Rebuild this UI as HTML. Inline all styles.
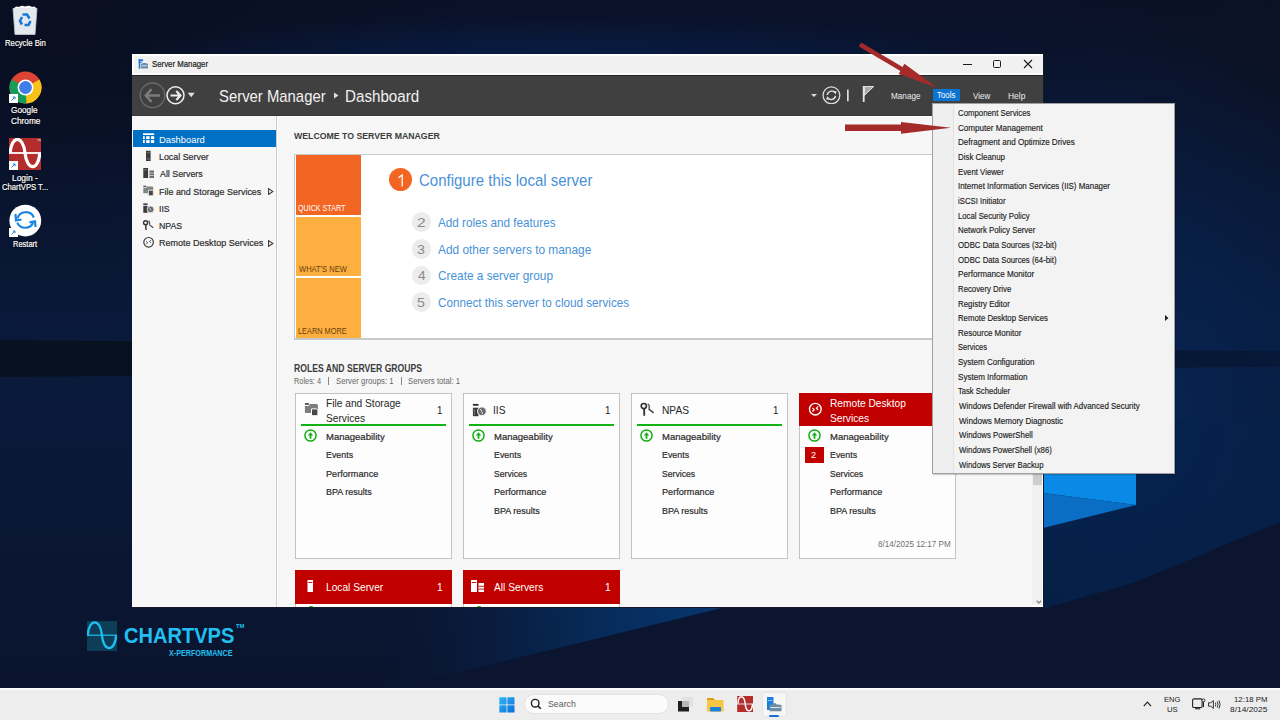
<!DOCTYPE html>
<html><head><meta charset="utf-8">
<style>
*{margin:0;padding:0;box-sizing:border-box}
html,body{width:1280px;height:720px;overflow:hidden}
body{position:relative;font-family:"Liberation Sans",sans-serif;background:#0a1228;line-height:normal}
.a{position:absolute;white-space:nowrap}
</style></head><body>
<svg class="a" style="left:0;top:0" width="1280" height="688" viewBox="0 0 1280 688">
 <defs>
  <linearGradient id="bgv" x1="0" y1="0" x2="0" y2="1">
   <stop offset="0" stop-color="#0a1128"/><stop offset="0.3" stop-color="#09193a"/><stop offset="0.55" stop-color="#0a1a3b"/><stop offset="0.85" stop-color="#0a1633"/><stop offset="1" stop-color="#0a142e"/>
  </linearGradient>
  <radialGradient id="tl" cx="0" cy="0" r="1" gradientUnits="userSpaceOnUse" gradientTransform="translate(60 40) scale(420 300)">
   <stop offset="0" stop-color="#090e1f" stop-opacity="0.9"/><stop offset="1" stop-color="#090e1f" stop-opacity="0"/>
  </radialGradient>
  <radialGradient id="tr" cx="0" cy="0" r="1" gradientUnits="userSpaceOnUse" gradientTransform="translate(1280 60) scale(300 260)">
   <stop offset="0" stop-color="#0b1226" stop-opacity="0.9"/><stop offset="1" stop-color="#0b1226" stop-opacity="0"/>
  </radialGradient>
  <radialGradient id="rb" cx="0" cy="0" r="1" gradientUnits="userSpaceOnUse" gradientTransform="translate(1120 420) scale(300 380)">
   <stop offset="0" stop-color="#062656" stop-opacity="0.9"/><stop offset="1" stop-color="#062656" stop-opacity="0"/>
  </radialGradient>
  <linearGradient id="band" x1="0" y1="0" x2="1280" y2="0" gradientUnits="userSpaceOnUse">
   <stop offset="0" stop-color="#08111f"/><stop offset="0.2" stop-color="#08111f"/><stop offset="1" stop-color="#071838"/>
  </linearGradient>
  <radialGradient id="topc" cx="0" cy="0" r="1" gradientUnits="userSpaceOnUse" gradientTransform="translate(560 64) scale(460 50)">
   <stop offset="0" stop-color="#07204f" stop-opacity="0.8"/><stop offset="1" stop-color="#07204f" stop-opacity="0"/>
  </radialGradient>
  <linearGradient id="beamA" x1="380" y1="0" x2="760" y2="0" gradientUnits="userSpaceOnUse">
   <stop offset="0" stop-color="#0b1a3a" stop-opacity="0"/><stop offset="0.55" stop-color="#072a58"/><stop offset="1" stop-color="#063a74"/>
  </linearGradient>
 </defs>
 <rect width="1280" height="688" fill="url(#bgv)"/>
 <rect width="1280" height="688" fill="url(#tl)"/>
 <rect width="1280" height="688" fill="url(#tr)"/>
 <rect width="1280" height="688" fill="url(#rb)"/>
 <rect width="1280" height="688" fill="url(#topc)"/>
 <polygon points="0,340 1280,351 1280,367 0,377" fill="url(#band)"/>
 <polygon points="300,688 420,682 726,607 1043,530 1043,688" fill="#0b1530"/>
 <polygon points="300,711 726,607 1043,529 1043,560 380,560" fill="url(#beamA)"/>
 <polygon points="1043,609 1136,582 1280,522 1280,688 1043,688" fill="#0b1530"/>
 <polygon points="1043,420 1280,420 1280,522 1136,582 1043,609" fill="#04214c" opacity="0.5"/>
</svg>
<svg class="a" style="left:1043px;top:440px" width="100" height="100">
 <polygon points="0,0 93,0 93,65 0,53" fill="#0a8ae6"/>
 <polygon points="0,53 93,65 0,88" fill="#0a6fc4"/>
</svg>
<svg class="a" style="left:11px;top:4px" width="28" height="32" viewBox="0 0 28 32">
  <path d="M2 4.5 L26 4.5 L24 30.5 L4 30.5 Z" fill="#e4e9ee" stroke="#c2ccd4" stroke-width="0.8"/>
  <path d="M2.5 4.8 Q5 1.5 8 3 Q11 0.8 14 2.5 Q18 0.8 21 3 Q24 1.5 25.5 4.8 Z" fill="#f5f7f9"/>
  <path d="M11.5 10.5 L16 10.5 L18.5 14.5" fill="none" stroke="#1a78d6" stroke-width="2.6"/>
  <path d="M19.5 17 L17.5 21 L13.5 21" fill="none" stroke="#1a78d6" stroke-width="2.6"/>
  <path d="M11 20.5 L9 17 L11 13" fill="none" stroke="#1a78d6" stroke-width="2.6"/>
</svg>
<div class="a" style="left:4.66px;top:38.40px;font-size:9.130px;font-weight:400;color:#fff;transform:scaleX(0.8468);transform-origin:0 0;text-shadow:0 0 2px #000,0 0 1px #000;-webkit-text-stroke:0.2px #fff">Recycle Bin</div>
<svg class="a" style="left:8px;top:70px" width="35" height="35" viewBox="-1 -1 35 35">
 <circle cx="16.5" cy="16.5" r="16.6" fill="#0a0f1a"/>
 <circle cx="16.5" cy="16.5" r="16" fill="#dd4436"/>
 <path d="M16.5 16.5 L2.64 8.5 A16 16 0 0 0 16.5 32.5 Z" fill="#169d56"/>
 <path d="M16.5 16.5 L16.5 32.5 A16 16 0 0 0 30.36 8.5 Z" fill="#f8c21a"/>
 <path d="M16.5 16.5 L8.5 30.36 A16 16 0 0 0 17.5 32.47 Z" fill="#169d56"/>
 <circle cx="16.5" cy="16.5" r="8" fill="#fff"/>
 <circle cx="16.5" cy="16.5" r="6.4" fill="#3f7ee8"/>
</svg>
<svg class="a" style="left:9px;top:94px" width="9" height="9" viewBox="0 0 9 9"><rect width="9" height="9" fill="#fff"/><path d="M2.5 6.5 L6 3 M3.8 3 L6 3 L6 5.2" fill="none" stroke="#2a7fd4" stroke-width="1"/></svg>
<div class="a" style="left:11.46px;top:105.15px;font-size:9.348px;font-weight:400;color:#fff;transform:scaleX(0.8821);transform-origin:0 0;text-shadow:0 0 2px #000,0 0 1px #000;-webkit-text-stroke:0.2px #fff">Google</div>
<div class="a" style="left:10.57px;top:114.88px;font-size:9.638px;font-weight:400;color:#fff;transform:scaleX(0.8602);transform-origin:0 0;text-shadow:0 0 2px #000,0 0 1px #000;-webkit-text-stroke:0.2px #fff">Chrome</div>
<svg class="a" style="left:9px;top:138px" width="32" height="32" viewBox="0 0 32 32">
 <rect width="32" height="32" fill="#b42c2c"/>
 <path d="M1.2 15 C2.5 -3.2 14 -3.2 16 15 C18 33.2 29.5 33.2 30.8 15" fill="none" stroke="#fff" stroke-width="3.2"/>
 <line x1="0" y1="15" x2="32" y2="15" stroke="#fff" stroke-width="1.8"/>
 <path d="M28.5 1.5 L30 1.5 M29.2 1.5 L29.2 3.2 M30.6 3.2 L30.6 1.5 L31.2 2.4 L31.8 1.5 L31.8 3.2" fill="none" stroke="#ddd" stroke-width="0.5"/>
</svg>
<svg class="a" style="left:9px;top:161px" width="9" height="9" viewBox="0 0 9 9"><rect width="9" height="9" fill="#fff"/><path d="M2.5 6.5 L6 3 M3.8 3 L6 3 L6 5.2" fill="none" stroke="#2a7fd4" stroke-width="1"/></svg>
<div class="a" style="left:12.15px;top:172.57px;font-size:8.406px;font-weight:400;color:#fff;transform:scaleX(1.0041);transform-origin:0 0;text-shadow:0 0 2px #000,0 0 1px #000;-webkit-text-stroke:0.2px #fff">Login -</div>
<div class="a" style="left:2.47px;top:181.87px;font-size:8.841px;font-weight:400;color:#fff;transform:scaleX(0.8692);transform-origin:0 0;text-shadow:0 0 2px #000,0 0 1px #000;-webkit-text-stroke:0.2px #fff">ChartVPS T...</div>
<svg class="a" style="left:9px;top:204px" width="33" height="33" viewBox="0 0 33 33">
 <circle cx="16.3" cy="16.6" r="15.9" fill="#fff"/>
 <path d="M8.5 14.5 A8.5 8 0 0 1 24.8 13.5" fill="none" stroke="#1a84de" stroke-width="2.2"/>
 <path d="M24 19 A8.5 8 0 0 1 8.3 18.6" fill="none" stroke="#1a84de" stroke-width="2.2"/>
 <path d="M6.5 10 L7 16.5 L12.5 15.5" fill="none" stroke="#1a84de" stroke-width="2.2"/>
 <path d="M26.5 23 L26 17.3 L20.5 18.3" fill="none" stroke="#1a84de" stroke-width="2.2"/>
</svg>
<svg class="a" style="left:9px;top:228px" width="9" height="9" viewBox="0 0 9 9"><rect width="9" height="9" fill="#fff"/><path d="M2.5 6.5 L6 3 M3.8 3 L6 3 L6 5.2" fill="none" stroke="#2a7fd4" stroke-width="1"/></svg>
<div class="a" style="left:13.03px;top:238.87px;font-size:8.406px;font-weight:400;color:#fff;transform:scaleX(0.8952);transform-origin:0 0;text-shadow:0 0 2px #000,0 0 1px #000;-webkit-text-stroke:0.2px #fff">Restart</div>
<svg class="a" style="left:87px;top:621px" width="30" height="30" viewBox="0 0 30 30">
 <rect width="30" height="30" fill="#0e3d57"/>
 <path d="M0.8 14.2 C1.8 -3 13.4 -3 14.9 14.2 C16.4 31.4 28 31.4 29.2 14.2" fill="none" stroke="#1ec0f2" stroke-width="2.3"/>
 <line x1="0" y1="14.2" x2="30" y2="14.2" stroke="#1ec0f2" stroke-width="1.2"/>
</svg>
<div class="a" style="left:124.49px;top:624.13px;font-size:21.159px;font-weight:700;color:#22c0f2;transform:scaleX(0.9481);transform-origin:0 0;">CHARTVPS</div>
<div class="a" style="left:236.00px;top:622.20px;font-size:6.087px;font-weight:700;color:#22c0f2;transform:scaleX(0.9412);transform-origin:0 0;">TM</div>
<div class="a" style="left:169.40px;top:647.77px;font-size:8.841px;font-weight:700;color:#22c0f2;transform:scaleX(0.8142);transform-origin:0 0;">X-PERFORMANCE</div>
<div class="a" style="left:1043px;top:54px;width:1px;height:554px;background:#141a28"></div>
<div class="a" style="left:132px;top:607px;width:912px;height:1px;background:#141a28"></div>
<div class="a" style="left:0;top:0;width:1280px;height:720px;clip-path:inset(54px 237px 113px 132px)">
<div class="a" style="left:132px;top:54px;width:911px;height:21px;background:#f1f1f1;border-top:2px solid #fff;border-left:2px solid #fff;border-bottom:2px solid #fbfbfb"></div>
<svg class="a" style="left:138px;top:59px" width="11" height="10" viewBox="0 0 11 10">
  <rect x="0.7" y="0.3" width="4.4" height="1.8" fill="#1a78d8"/>
  <rect x="0.7" y="0.3" width="1.6" height="9.4" fill="#1a78d8"/>
  <rect x="0.7" y="2.8" width="3.6" height="0.9" fill="#1a78d8"/>
  <path d="M3.1 5 L5 4 L8 4 L10 5 L10 9.6 L3.1 9.6 Z" fill="#6d8fae"/>
  <rect x="4" y="6.3" width="5.2" height="0.9" fill="#d8e4ee"/>
</svg>
<div class="a" style="left:152.33px;top:59.15px;font-size:9.348px;font-weight:400;color:#1a1a1a;transform:scaleX(0.8377);transform-origin:0 0;-webkit-text-stroke:0.2px #1a1a1a">Server Manager</div>
<div class="a" style="left:963px;top:64px;width:9px;height:1px;background:#1e1e1e"></div>
<div class="a" style="left:993px;top:60px;width:8px;height:8px;border:1px solid #1e1e1e;border-radius:1.5px"></div>
<svg class="a" style="left:1023px;top:59px" width="10" height="10" viewBox="0 0 10 10"><path d="M1 1 L9 9 M9 1 L1 9" stroke="#1e1e1e" stroke-width="1.1"/></svg>
<div class="a" style="left:132px;top:75px;width:911px;height:41px;background:#404040;border-top:1px solid #262626;border-bottom:1px solid #383838"></div>
<svg class="a" style="left:139px;top:82px" width="60" height="28" viewBox="0 0 60 28">
  <circle cx="13.5" cy="13.3" r="12.3" fill="none" stroke="#6c6c6c" stroke-width="1.3"/>
  <path d="M6.8 13.5 L21 13.5 M12.6 7.2 L6.8 13.5 L12.6 19.8" fill="none" stroke="#7c7c7c" stroke-width="2.5"/>
  <circle cx="36.5" cy="13.3" r="8.5" fill="none" stroke="#eeeeee" stroke-width="1.5"/>
  <path d="M31.5 13.5 L41.5 13.5 M37.3 9 L41.5 13.5 L37.3 18" fill="none" stroke="#eeeeee" stroke-width="2.1"/>
  <path d="M48.7 10.8 L55.7 10.8 L52.2 15.2 Z" fill="#e0e0e0"/>
</svg>
<div class="a" style="left:219.06px;top:86.20px;font-size:17.391px;font-weight:400;color:#f2f2f2;transform:scaleX(0.8559);transform-origin:0 0;">Server Manager</div>
<svg class="a" style="left:334px;top:92px" width="5" height="7"><path d="M0 0.5 L4.5 3.5 L0 6.5 Z" fill="#e0e0e0"/></svg>
<div class="a" style="left:345.05px;top:86.80px;font-size:16.522px;font-weight:400;color:#f2f2f2;transform:scaleX(0.9185);transform-origin:0 0;">Dashboard</div>
<svg class="a" style="left:808px;top:84px" width="70" height="20" viewBox="0 0 70 20">
  <path d="M3 10 L9 10 L6 13 Z" fill="#dcdcdc"/>
  <circle cx="23.4" cy="11.3" r="8.4" fill="none" stroke="#dcdcdc" stroke-width="1.3"/>
  <path d="M19.3 11 A4.3 4.3 0 0 1 26.8 8.6" fill="none" stroke="#dcdcdc" stroke-width="1.5"/>
  <path d="M27.5 11.8 A4.3 4.3 0 0 1 20 14" fill="none" stroke="#dcdcdc" stroke-width="1.5"/>
  <path d="M25 6.8 L28.6 7.2 L27.6 10.6 Z" fill="#dcdcdc"/>
  <path d="M21.8 15.8 L18.2 15.4 L19.2 12 Z" fill="#dcdcdc"/>
  <rect x="39" y="5.6" width="1.7" height="11.7" fill="#dcdcdc"/>
  <rect x="54.8" y="2" width="1.8" height="16" fill="#e6e6e6"/>
  <path d="M56.4 2.6 L65.6 2.6 L56.4 11.4 Z" fill="#a8a8a8" stroke="#e6e6e6" stroke-width="1"/>
</svg>
<div class="a" style="left:890.68px;top:90.85px;font-size:8.478px;font-weight:400;color:#eeeeee;transform:scaleX(0.9661);transform-origin:0 0;">Manage</div>
<div class="a" style="left:932.5px;top:89.3px;width:27px;height:12px;background:#0a74d0"></div>
<div class="a" style="left:936.98px;top:90.32px;font-size:9.058px;font-weight:400;color:#ffffff;transform:scaleX(0.8732);transform-origin:0 0;">Tools</div>
<div class="a" style="left:972.70px;top:90.58px;font-size:8.768px;font-weight:400;color:#eeeeee;transform:scaleX(0.9173);transform-origin:0 0;">View</div>
<div class="a" style="left:1007.98px;top:90.58px;font-size:8.768px;font-weight:400;color:#eeeeee;transform:scaleX(0.9647);transform-origin:0 0;">Help</div>
<div class="a" style="left:132px;top:116px;width:145px;height:491px;background:#f7f7f7;border-right:1px solid #cdcdcd"></div>
<div class="a" style="left:277px;top:116px;width:1px;height:491px;background:#ffffff"></div>
<div class="a" style="left:133px;top:130px;width:143px;height:17px;background:#0071c5"></div>
<svg class="a" style="left:143px;top:133px" width="12" height="11" viewBox="0 0 12 11">
  <rect x="0" y="0.3" width="11.2" height="1.7" fill="#fff"/>
  <rect x="0" y="3.2" width="1.8" height="2.9" fill="#fff"/><rect x="3.2" y="3.2" width="3.4" height="2.9" fill="#fff"/><rect x="7.9" y="3.2" width="3.3" height="2.9" fill="#fff"/>
  <rect x="0" y="7.1" width="1.8" height="2.9" fill="#fff"/><rect x="3.2" y="7.1" width="3.4" height="2.9" fill="#fff"/><rect x="7.9" y="7.1" width="3.3" height="2.9" fill="#fff"/>
</svg>
<svg class="a" style="left:140px;top:148px" width="18" height="102" viewBox="140 148 18 102">
  <rect x="146" y="150.8" width="4.6" height="10.2" fill="#3a3a3a"/><rect x="146.7" y="152.4" width="3.2" height="0.8" fill="#8a8a8a"/><rect x="146.7" y="158.6" width="3.2" height="0.8" fill="#8a8a8a"/>
  <rect x="143.3" y="168" width="4.8" height="10" fill="#3a3a3a"/><rect x="144" y="169.5" width="3.4" height="0.8" fill="#8a8a8a"/>
  <rect x="149.5" y="170.5" width="4.5" height="7.5" fill="#6a6a6a"/><rect x="149.5" y="172.6" width="4.5" height="0.9" fill="#cfcfcf"/><rect x="149.5" y="175" width="4.5" height="0.9" fill="#cfcfcf"/>
  <rect x="143.3" y="185.7" width="3" height="1.3" fill="#555"/><path d="M143.3 187.7 L146.3 187.7 L146.9 186.4 L152.4 186.4 L153.2 187.1 L153.2 193.3 L143.3 193.3 Z" fill="#828282"/>
  <path d="M148.4 190.2 L152.2 190.2 L153.3 191.3 L153.3 195.8 L148.4 195.8 Z" fill="#474747" stroke="#f7f7f7" stroke-width="0.8"/>
  <rect x="143.3" y="203.4" width="4.3" height="1.5" fill="#333"/><rect x="143.3" y="205.8" width="4.3" height="7" fill="#3a3a3a"/>
  <circle cx="150.6" cy="209.4" r="3.4" fill="#6a6a6a" stroke="#f7f7f7" stroke-width="0.8"/><path d="M149.2 207.9 L150.4 208.4 L150.1 209.6 L151.2 210.4" fill="none" stroke="#dcdcdc" stroke-width="0.8"/>
  <circle cx="145.6" cy="222.8" r="2" fill="none" stroke="#333" stroke-width="1.4"/><path d="M145.8 224.7 L146 230" stroke="#333" stroke-width="1.4"/>
  <path d="M148.5 220.7 Q150.4 222 149.4 224.6" fill="none" stroke="#555" stroke-width="1.1"/><path d="M149.3 224.6 L153.2 227.7" stroke="#444" stroke-width="1.2"/>
  <circle cx="148.6" cy="242.3" r="4.8" fill="none" stroke="#3a3a3a" stroke-width="1.2"/>
  <path d="M146.3 241.3 L147.7 242.7 L146.3 244.1 M150.9 240.1 L149.5 241.5 L150.9 242.9" fill="none" stroke="#3a3a3a" stroke-width="0.9"/>
</svg>
<div class="a" style="left:158.97px;top:133.80px;font-size:9.565px;font-weight:400;color:#ffffff;transform:scaleX(0.9790);transform-origin:0 0;">Dashboard</div>
<div class="a" style="left:159.00px;top:151.05px;font-size:9.565px;font-weight:400;color:#2e2e2e;transform:scaleX(0.9289);transform-origin:0 0;-webkit-text-stroke:0.2px #2e2e2e">Local Server</div>
<div class="a" style="left:159.70px;top:168.30px;font-size:9.565px;font-weight:400;color:#2e2e2e;transform:scaleX(0.9246);transform-origin:0 0;-webkit-text-stroke:0.2px #2e2e2e">All Servers</div>
<div class="a" style="left:159.00px;top:185.55px;font-size:9.565px;font-weight:400;color:#2e2e2e;transform:scaleX(0.9358);transform-origin:0 0;-webkit-text-stroke:0.2px #2e2e2e">File and Storage Services</div>
<div class="a" style="left:159.02px;top:202.80px;font-size:9.565px;font-weight:400;color:#2e2e2e;transform:scaleX(0.9048);transform-origin:0 0;-webkit-text-stroke:0.2px #2e2e2e">IIS</div>
<div class="a" style="left:159.01px;top:220.05px;font-size:9.565px;font-weight:400;color:#2e2e2e;transform:scaleX(0.9155);transform-origin:0 0;-webkit-text-stroke:0.2px #2e2e2e">NPAS</div>
<div class="a" style="left:158.99px;top:237.30px;font-size:9.565px;font-weight:400;color:#2e2e2e;transform:scaleX(0.9446);transform-origin:0 0;-webkit-text-stroke:0.2px #2e2e2e">Remote Desktop Services</div>
<svg class="a" style="left:268px;top:188px" width="6" height="7"><path d="M0.6 0.6 L4.8 3.5 L0.6 6.4 Z" fill="none" stroke="#3a3a3a" stroke-width="1.1"/></svg>
<svg class="a" style="left:268px;top:240px" width="6" height="7"><path d="M0.6 0.6 L4.8 3.5 L0.6 6.4 Z" fill="none" stroke="#3a3a3a" stroke-width="1.1"/></svg>
<div class="a" style="left:278px;top:116px;width:755px;height:491px;background:#f7f7f7;border-top:1px solid #fdfdfd"></div>
<div class="a" style="left:294.40px;top:129.75px;font-size:9.783px;font-weight:700;color:#3c3c3c;transform:scaleX(0.8946);transform-origin:0 0;">WELCOME TO SERVER MANAGER</div>
<div class="a" style="left:294px;top:154px;width:760px;height:186px;background:#fff;border:1px solid #c9c9c9;border-left:1.5px solid #c4c8cc;border-bottom:2px solid #c6cacd"></div>
<div class="a" style="left:295.5px;top:155px;width:65.5px;height:60px;background:#f26522"></div>
<div class="a" style="left:295.5px;top:217px;width:65.5px;height:59px;background:#fdb040"></div>
<div class="a" style="left:295.5px;top:278px;width:65.5px;height:60px;background:#fdb040"></div>
<div class="a" style="left:298.11px;top:202.57px;font-size:9.275px;font-weight:400;color:#ffffff;transform:scaleX(0.7704);transform-origin:0 0;">QUICK START</div>
<div class="a" style="left:298.50px;top:263.70px;font-size:9.130px;font-weight:400;color:#6a3d0e;transform:scaleX(0.8277);transform-origin:0 0;">WHAT'S NEW</div>
<div class="a" style="left:297.92px;top:324.60px;font-size:9.565px;font-weight:400;color:#6a3d0e;transform:scaleX(0.7710);transform-origin:0 0;">LEARN MORE</div>
<div class="a" style="left:388.9px;top:168.3px;width:23.2px;height:23.2px;border-radius:50%;background:#f26522"></div>
<svg class="a" style="left:396px;top:173px" width="10" height="16" viewBox="396 173 10 16"><path d="M398.6 177.6 L402.2 175 L402.2 186.4" fill="none" stroke="#ffffff" stroke-width="1.3"/></svg>
<div class="a" style="left:418.92px;top:171.30px;font-size:16.522px;font-weight:400;color:#4892d6;transform:scaleX(0.9084);transform-origin:0 0;">Configure this local server</div>
<div class="a" style="left:411.6px;top:212.4px;width:19.8px;height:19.8px;border-radius:50%;background:#ececec"></div>
<div class="a" style="left:416.94px;top:214.70px;font-size:13.478px;font-weight:400;color:#8a8a8a;transform:scaleX(1.1500);transform-origin:0 0;">2</div>
<div class="a" style="left:438.40px;top:214.70px;font-size:13.478px;font-weight:400;color:#4892d6;transform:scaleX(0.8674);transform-origin:0 0;">Add roles and features</div>
<div class="a" style="left:411.6px;top:239.1px;width:19.8px;height:19.8px;border-radius:50%;background:#ececec"></div>
<div class="a" style="left:417.27px;top:241.70px;font-size:13.478px;font-weight:400;color:#8a8a8a;transform:scaleX(1.0615);transform-origin:0 0;">3</div>
<div class="a" style="left:438.40px;top:241.70px;font-size:13.478px;font-weight:400;color:#4892d6;transform:scaleX(0.8827);transform-origin:0 0;">Add other servers to manage</div>
<div class="a" style="left:411.6px;top:265.6px;width:19.8px;height:19.8px;border-radius:50%;background:#ececec"></div>
<div class="a" style="left:417.54px;top:268.10px;font-size:13.478px;font-weight:400;color:#8a8a8a;transform:scaleX(1.0222);transform-origin:0 0;">4</div>
<div class="a" style="left:437.74px;top:268.10px;font-size:13.478px;font-weight:400;color:#4892d6;transform:scaleX(0.8778);transform-origin:0 0;">Create a server group</div>
<div class="a" style="left:411.6px;top:292.1px;width:19.8px;height:19.8px;border-radius:50%;background:#ececec"></div>
<div class="a" style="left:417.27px;top:294.80px;font-size:13.478px;font-weight:400;color:#8a8a8a;transform:scaleX(1.0615);transform-origin:0 0;">5</div>
<div class="a" style="left:437.75px;top:294.80px;font-size:13.478px;font-weight:400;color:#4892d6;transform:scaleX(0.8685);transform-origin:0 0;">Connect this server to cloud services</div>
<div class="a" style="left:293.86px;top:362.67px;font-size:10.145px;font-weight:700;color:#3c3c3c;transform:scaleX(0.8523);transform-origin:0 0;">ROLES AND SERVER GROUPS</div>
<div class="a" style="left:293.92px;top:374.80px;font-size:9.565px;font-weight:400;color:#666666;transform:scaleX(0.7706);transform-origin:0 0;">Roles: 4</div>
<div class="a" style="left:328.3px;top:377px;width:0.9px;height:8px;background:#888"></div>
<div class="a" style="left:335.69px;top:374.80px;font-size:9.565px;font-weight:400;color:#666666;transform:scaleX(0.8158);transform-origin:0 0;">Server groups: 1</div>
<div class="a" style="left:400.7px;top:377px;width:0.9px;height:8px;background:#888"></div>
<div class="a" style="left:407.69px;top:374.80px;font-size:9.565px;font-weight:400;color:#666666;transform:scaleX(0.8126);transform-origin:0 0;">Servers total: 1</div>
<div class="a" style="left:295px;top:393px;width:157px;height:166px;background:#fdfdfd;border:1px solid #c3c3c3"></div>
<div class="a" style="left:325.88px;top:397.17px;font-size:10.580px;font-weight:400;color:#262626;transform:scaleX(0.9630);transform-origin:0 0;">File and Storage</div>
<div class="a" style="left:326.12px;top:411.57px;font-size:10.580px;font-weight:400;color:#262626;transform:scaleX(0.9630);transform-origin:0 0;">Services</div>
<svg class="a" style="left:304px;top:402px" width="15" height="15" viewBox="0 0 15 15"><rect x="0.9" y="1" width="4" height="1.8" fill="#505050"/><path d="M0.9 3.9 L4.8 3.9 L5.6 2 L13 2 L13.9 2.9 L13.9 11 L0.9 11 Z" fill="#7d7d7d"/><path d="M7.5 6.9 L12.6 6.9 L13.9 8.2 L13.9 13.7 L7.5 13.7 Z" fill="#474747" stroke="#fdfdfd" stroke-width="1"/></svg>
<div class="a" style="left:301px;top:424px;width:145px;height:2px;background:#13b313"></div>
<div class="a" style="left:436.78px;top:404.77px;font-size:10.145px;font-weight:400;color:#262626;transform:scaleX(0.9630);transform-origin:0 0;">1</div>
<svg class="a" style="left:303.5px;top:429.3px" width="13" height="13" viewBox="0 0 13 13"><circle cx="6.5" cy="6.5" r="5.6" fill="none" stroke="#12b012" stroke-width="1.5"/><path d="M6.5 3.3 L9.2 6.4 L7.4 6.4 L7.4 9.7 L5.6 9.7 L5.6 6.4 L3.8 6.4 Z" fill="#12b012"/></svg>
<div class="a" style="left:325.87px;top:430.67px;font-size:9.710px;font-weight:400;color:#2a2a2a;transform:scaleX(0.9797);transform-origin:0 0;-webkit-text-stroke:0.2px #2a2a2a">Manageability</div>
<div class="a" style="left:325.92px;top:449.17px;font-size:9.710px;font-weight:400;color:#2a2a2a;transform:scaleX(0.9123);transform-origin:0 0;-webkit-text-stroke:0.2px #2a2a2a">Events</div>
<div class="a" style="left:325.89px;top:467.77px;font-size:9.710px;font-weight:400;color:#2a2a2a;transform:scaleX(0.9413);transform-origin:0 0;-webkit-text-stroke:0.2px #2a2a2a">Performance</div>
<div class="a" style="left:325.91px;top:486.47px;font-size:9.710px;font-weight:400;color:#2a2a2a;transform:scaleX(0.9244);transform-origin:0 0;-webkit-text-stroke:0.2px #2a2a2a">BPA results</div>
<div class="a" style="left:463px;top:393px;width:157px;height:166px;background:#fdfdfd;border:1px solid #c3c3c3"></div>
<div class="a" style="left:493.34px;top:404.37px;font-size:10.580px;font-weight:400;color:#262626;transform:scaleX(0.9630);transform-origin:0 0;">IIS</div>
<svg class="a" style="left:472px;top:402.5px" width="15" height="14" viewBox="0 0 15 14"><rect x="0.9" y="0.9" width="5.6" height="1.9" fill="#333"/><rect x="0.9" y="4.7" width="5.6" height="8.5" fill="#3a3a3a"/><rect x="1.9" y="5.8" width="1" height="6.5" fill="#777"/><circle cx="9.9" cy="8.3" r="4.4" fill="#6a6a6a" stroke="#fdfdfd" stroke-width="1"/><path d="M8 6.3 L9.6 7 L9.2 8.6 L10.6 9.6 L10 11.4" fill="none" stroke="#dcdcdc" stroke-width="1"/></svg>
<div class="a" style="left:469px;top:424px;width:145px;height:2px;background:#13b313"></div>
<div class="a" style="left:604.78px;top:404.77px;font-size:10.145px;font-weight:400;color:#262626;transform:scaleX(0.9630);transform-origin:0 0;">1</div>
<svg class="a" style="left:471.5px;top:429.3px" width="13" height="13" viewBox="0 0 13 13"><circle cx="6.5" cy="6.5" r="5.6" fill="none" stroke="#12b012" stroke-width="1.5"/><path d="M6.5 3.3 L9.2 6.4 L7.4 6.4 L7.4 9.7 L5.6 9.7 L5.6 6.4 L3.8 6.4 Z" fill="#12b012"/></svg>
<div class="a" style="left:493.87px;top:430.67px;font-size:9.710px;font-weight:400;color:#2a2a2a;transform:scaleX(0.9797);transform-origin:0 0;-webkit-text-stroke:0.2px #2a2a2a">Manageability</div>
<div class="a" style="left:493.92px;top:449.17px;font-size:9.710px;font-weight:400;color:#2a2a2a;transform:scaleX(0.9123);transform-origin:0 0;-webkit-text-stroke:0.2px #2a2a2a">Events</div>
<div class="a" style="left:494.15px;top:467.77px;font-size:9.710px;font-weight:400;color:#2a2a2a;transform:scaleX(0.8904);transform-origin:0 0;-webkit-text-stroke:0.2px #2a2a2a">Services</div>
<div class="a" style="left:493.89px;top:486.47px;font-size:9.710px;font-weight:400;color:#2a2a2a;transform:scaleX(0.9413);transform-origin:0 0;-webkit-text-stroke:0.2px #2a2a2a">Performance</div>
<div class="a" style="left:493.91px;top:505.07px;font-size:9.710px;font-weight:400;color:#2a2a2a;transform:scaleX(0.9244);transform-origin:0 0;-webkit-text-stroke:0.2px #2a2a2a">BPA results</div>
<div class="a" style="left:631px;top:393px;width:157px;height:166px;background:#fdfdfd;border:1px solid #c3c3c3"></div>
<div class="a" style="left:661.58px;top:404.37px;font-size:10.580px;font-weight:400;color:#262626;transform:scaleX(0.9630);transform-origin:0 0;">NPAS</div>
<svg class="a" style="left:640px;top:401.5px" width="15" height="15" viewBox="0 0 15 15"><circle cx="3.8" cy="4.1" r="2.6" fill="none" stroke="#333" stroke-width="1.7"/><path d="M4.1 6.5 L4.3 13.8" stroke="#333" stroke-width="1.8"/><path d="M7.7 1.7 Q10.2 3.5 8.8 6.8" fill="none" stroke="#555" stroke-width="1.4"/><path d="M8.6 6.8 L13.6 10.9" stroke="#444" stroke-width="1.5"/></svg>
<div class="a" style="left:637px;top:424px;width:145px;height:2px;background:#13b313"></div>
<div class="a" style="left:772.78px;top:404.77px;font-size:10.145px;font-weight:400;color:#262626;transform:scaleX(0.9630);transform-origin:0 0;">1</div>
<svg class="a" style="left:639.5px;top:429.3px" width="13" height="13" viewBox="0 0 13 13"><circle cx="6.5" cy="6.5" r="5.6" fill="none" stroke="#12b012" stroke-width="1.5"/><path d="M6.5 3.3 L9.2 6.4 L7.4 6.4 L7.4 9.7 L5.6 9.7 L5.6 6.4 L3.8 6.4 Z" fill="#12b012"/></svg>
<div class="a" style="left:661.87px;top:430.67px;font-size:9.710px;font-weight:400;color:#2a2a2a;transform:scaleX(0.9797);transform-origin:0 0;-webkit-text-stroke:0.2px #2a2a2a">Manageability</div>
<div class="a" style="left:661.92px;top:449.17px;font-size:9.710px;font-weight:400;color:#2a2a2a;transform:scaleX(0.9123);transform-origin:0 0;-webkit-text-stroke:0.2px #2a2a2a">Events</div>
<div class="a" style="left:662.15px;top:467.77px;font-size:9.710px;font-weight:400;color:#2a2a2a;transform:scaleX(0.8904);transform-origin:0 0;-webkit-text-stroke:0.2px #2a2a2a">Services</div>
<div class="a" style="left:661.89px;top:486.47px;font-size:9.710px;font-weight:400;color:#2a2a2a;transform:scaleX(0.9413);transform-origin:0 0;-webkit-text-stroke:0.2px #2a2a2a">Performance</div>
<div class="a" style="left:661.91px;top:505.07px;font-size:9.710px;font-weight:400;color:#2a2a2a;transform:scaleX(0.9244);transform-origin:0 0;-webkit-text-stroke:0.2px #2a2a2a">BPA results</div>
<div class="a" style="left:799px;top:393px;width:157px;height:166px;background:#fdfdfd;border:1px solid #c3c3c3"></div>
<div class="a" style="left:799px;top:393px;width:157px;height:32.6px;background:#c10000"></div>
<div class="a" style="left:829.88px;top:397.17px;font-size:10.580px;font-weight:400;color:#ffffff;transform:scaleX(0.9630);transform-origin:0 0;">Remote Desktop</div>
<div class="a" style="left:830.12px;top:411.57px;font-size:10.580px;font-weight:400;color:#ffffff;transform:scaleX(0.9630);transform-origin:0 0;">Services</div>
<svg class="a" style="left:808px;top:402px" width="15" height="15" viewBox="808 402 15 15"><circle cx="815.3" cy="409.2" r="5.8" fill="none" stroke="#fff" stroke-width="1.4"/><path d="M812.4 407.9 L814.2 409.7 L812.4 411.5 M818.2 406.4 L816.4 408.2 L818.2 410" fill="none" stroke="#fff" stroke-width="1.2"/></svg>
<svg class="a" style="left:807.5px;top:429.3px" width="13" height="13" viewBox="0 0 13 13"><circle cx="6.5" cy="6.5" r="5.6" fill="none" stroke="#12b012" stroke-width="1.5"/><path d="M6.5 3.3 L9.2 6.4 L7.4 6.4 L7.4 9.7 L5.6 9.7 L5.6 6.4 L3.8 6.4 Z" fill="#12b012"/></svg>
<div class="a" style="left:829.87px;top:430.67px;font-size:9.710px;font-weight:400;color:#2a2a2a;transform:scaleX(0.9797);transform-origin:0 0;-webkit-text-stroke:0.2px #2a2a2a">Manageability</div>
<div class="a" style="left:829.92px;top:449.17px;font-size:9.710px;font-weight:400;color:#2a2a2a;transform:scaleX(0.9123);transform-origin:0 0;-webkit-text-stroke:0.2px #2a2a2a">Events</div>
<div class="a" style="left:830.15px;top:467.77px;font-size:9.710px;font-weight:400;color:#2a2a2a;transform:scaleX(0.8904);transform-origin:0 0;-webkit-text-stroke:0.2px #2a2a2a">Services</div>
<div class="a" style="left:829.89px;top:486.47px;font-size:9.710px;font-weight:400;color:#2a2a2a;transform:scaleX(0.9413);transform-origin:0 0;-webkit-text-stroke:0.2px #2a2a2a">Performance</div>
<div class="a" style="left:829.91px;top:505.07px;font-size:9.710px;font-weight:400;color:#2a2a2a;transform:scaleX(0.9244);transform-origin:0 0;-webkit-text-stroke:0.2px #2a2a2a">BPA results</div>
<div class="a" style="left:805px;top:447px;width:19px;height:15.5px;background:#c10000"></div>
<div class="a" style="left:811.03px;top:449.17px;font-size:9.710px;font-weight:400;color:#ffffff;transform:scaleX(0.9450);transform-origin:0 0;">2</div>
<div class="a" style="left:878.06px;top:539.10px;font-size:9.130px;font-weight:400;color:#707070;transform:scaleX(0.8840);transform-origin:0 0;">8/14/2025 12:17 PM</div>
<div class="a" style="left:295px;top:570px;width:157px;height:45px;background:#fdfdfd;border:1px solid #c3c3c3"></div>
<div class="a" style="left:295px;top:570px;width:157px;height:34px;background:#c10000"></div>
<div class="a" style="left:325.58px;top:581.07px;font-size:10.580px;font-weight:400;color:#ffffff;transform:scaleX(0.9630);transform-origin:0 0;">Local Server</div>
<div class="a" style="left:436.78px;top:581.07px;font-size:10.580px;font-weight:400;color:#ffffff;transform:scaleX(0.9630);transform-origin:0 0;">1</div>
<svg class="a" style="left:307px;top:605px" width="8" height="4"><circle cx="4" cy="4" r="3" fill="#12b012"/></svg>
<div class="a" style="left:463px;top:570px;width:157px;height:45px;background:#fdfdfd;border:1px solid #c3c3c3"></div>
<div class="a" style="left:463px;top:570px;width:157px;height:34px;background:#c10000"></div>
<div class="a" style="left:494.30px;top:581.07px;font-size:10.580px;font-weight:400;color:#ffffff;transform:scaleX(0.9630);transform-origin:0 0;">All Servers</div>
<div class="a" style="left:604.78px;top:581.07px;font-size:10.580px;font-weight:400;color:#ffffff;transform:scaleX(0.9630);transform-origin:0 0;">1</div>
<svg class="a" style="left:475px;top:605px" width="8" height="4"><circle cx="4" cy="4" r="3" fill="#12b012"/></svg>
<svg class="a" style="left:307px;top:580px" width="8" height="13"><rect x="0.5" y="0" width="5.5" height="12" fill="#fff"/><rect x="1.3" y="2" width="4" height="0.9" fill="#c10000"/></svg>
<svg class="a" style="left:471px;top:580px" width="15" height="13"><rect x="0" y="0" width="6" height="12" fill="#fff"/><rect x="7.5" y="3" width="5.5" height="9" fill="#fff"/><rect x="7.5" y="5.8" width="5.5" height="0.9" fill="#c10000"/><rect x="7.5" y="8.6" width="5.5" height="0.9" fill="#c10000"/><rect x="0.8" y="2" width="4.4" height="0.9" fill="#c10000"/></svg>
<div class="a" style="left:1032px;top:116px;width:11px;height:491px;background:#f0f0f0"></div>
<div class="a" style="left:1033px;top:473px;width:9px;height:12px;background:#cdcdcd"></div>
<div class="a" style="left:1042px;top:116px;width:1px;height:491px;background:#ffffff"></div>
<div class="a" style="left:1032px;top:605px;width:11px;height:2px;background:#ffffff"></div>
<svg class="a" style="left:1035.5px;top:599.5px" width="6" height="4"><path d="M0.7 0.7 L2.9 3 L5.1 0.7" fill="none" stroke="#8a8a8a" stroke-width="1.3"/></svg>
</div>
<div class="a" style="left:932px;top:103px;width:243px;height:371px;background:#f3f3f3;border:1px solid #a0a0a0;box-shadow:1px 1px 1px rgba(0,0,0,0.18)"></div>
<div class="a" style="left:933px;top:104px;width:21px;height:369px;background:#efefef;border-right:1px solid #e2e2e2"></div>
<div class="a" style="left:958.26px;top:108.07px;font-size:8.841px;font-weight:400;color:#1c1c1c;transform:scaleX(0.8849);transform-origin:0 0;-webkit-text-stroke:0.15px #1c1c1c">Component Services</div>
<div class="a" style="left:958.24px;top:122.72px;font-size:8.841px;font-weight:400;color:#1c1c1c;transform:scaleX(0.9149);transform-origin:0 0;-webkit-text-stroke:0.15px #1c1c1c">Computer Management</div>
<div class="a" style="left:958.02px;top:137.37px;font-size:8.841px;font-weight:400;color:#1c1c1c;transform:scaleX(0.9110);transform-origin:0 0;-webkit-text-stroke:0.15px #1c1c1c">Defragment and Optimize Drives</div>
<div class="a" style="left:958.03px;top:152.02px;font-size:8.841px;font-weight:400;color:#1c1c1c;transform:scaleX(0.8942);transform-origin:0 0;-webkit-text-stroke:0.15px #1c1c1c">Disk Cleanup</div>
<div class="a" style="left:958.04px;top:166.67px;font-size:8.841px;font-weight:400;color:#1c1c1c;transform:scaleX(0.8833);transform-origin:0 0;-webkit-text-stroke:0.15px #1c1c1c">Event Viewer</div>
<div class="a" style="left:958.03px;top:181.32px;font-size:8.841px;font-weight:400;color:#1c1c1c;transform:scaleX(0.8979);transform-origin:0 0;-webkit-text-stroke:0.15px #1c1c1c">Internet Information Services (IIS) Manager</div>
<div class="a" style="left:958.26px;top:195.97px;font-size:8.841px;font-weight:400;color:#1c1c1c;transform:scaleX(0.8808);transform-origin:0 0;-webkit-text-stroke:0.15px #1c1c1c">iSCSI Initiator</div>
<div class="a" style="left:958.04px;top:210.62px;font-size:8.841px;font-weight:400;color:#1c1c1c;transform:scaleX(0.8780);transform-origin:0 0;-webkit-text-stroke:0.15px #1c1c1c">Local Security Policy</div>
<div class="a" style="left:958.03px;top:225.27px;font-size:8.841px;font-weight:400;color:#1c1c1c;transform:scaleX(0.8901);transform-origin:0 0;-webkit-text-stroke:0.15px #1c1c1c">Network Policy Server</div>
<div class="a" style="left:958.26px;top:239.92px;font-size:8.841px;font-weight:400;color:#1c1c1c;transform:scaleX(0.8811);transform-origin:0 0;-webkit-text-stroke:0.15px #1c1c1c">ODBC Data Sources (32-bit)</div>
<div class="a" style="left:958.26px;top:254.57px;font-size:8.841px;font-weight:400;color:#1c1c1c;transform:scaleX(0.8811);transform-origin:0 0;-webkit-text-stroke:0.15px #1c1c1c">ODBC Data Sources (64-bit)</div>
<div class="a" style="left:958.01px;top:269.22px;font-size:8.841px;font-weight:400;color:#1c1c1c;transform:scaleX(0.9239);transform-origin:0 0;-webkit-text-stroke:0.15px #1c1c1c">Performance Monitor</div>
<div class="a" style="left:958.04px;top:283.87px;font-size:8.841px;font-weight:400;color:#1c1c1c;transform:scaleX(0.8827);transform-origin:0 0;-webkit-text-stroke:0.15px #1c1c1c">Recovery Drive</div>
<div class="a" style="left:958.03px;top:298.52px;font-size:8.841px;font-weight:400;color:#1c1c1c;transform:scaleX(0.8956);transform-origin:0 0;-webkit-text-stroke:0.15px #1c1c1c">Registry Editor</div>
<div class="a" style="left:958.04px;top:313.17px;font-size:8.841px;font-weight:400;color:#1c1c1c;transform:scaleX(0.8817);transform-origin:0 0;-webkit-text-stroke:0.15px #1c1c1c">Remote Desktop Services</div>
<div class="a" style="left:958.02px;top:327.82px;font-size:8.841px;font-weight:400;color:#1c1c1c;transform:scaleX(0.9098);transform-origin:0 0;-webkit-text-stroke:0.15px #1c1c1c">Resource Monitor</div>
<div class="a" style="left:958.27px;top:342.47px;font-size:8.841px;font-weight:400;color:#1c1c1c;transform:scaleX(0.8545);transform-origin:0 0;-webkit-text-stroke:0.15px #1c1c1c">Services</div>
<div class="a" style="left:958.25px;top:357.12px;font-size:8.841px;font-weight:400;color:#1c1c1c;transform:scaleX(0.9066);transform-origin:0 0;-webkit-text-stroke:0.15px #1c1c1c">System Configuration</div>
<div class="a" style="left:958.24px;top:371.77px;font-size:8.841px;font-weight:400;color:#1c1c1c;transform:scaleX(0.9133);transform-origin:0 0;-webkit-text-stroke:0.15px #1c1c1c">System Information</div>
<div class="a" style="left:958.48px;top:386.42px;font-size:8.841px;font-weight:400;color:#1c1c1c;transform:scaleX(0.8633);transform-origin:0 0;-webkit-text-stroke:0.15px #1c1c1c">Task Scheduler</div>
<div class="a" style="left:958.70px;top:401.07px;font-size:8.841px;font-weight:400;color:#1c1c1c;transform:scaleX(0.8979);transform-origin:0 0;-webkit-text-stroke:0.15px #1c1c1c">Windows Defender Firewall with Advanced Security</div>
<div class="a" style="left:958.70px;top:415.72px;font-size:8.841px;font-weight:400;color:#1c1c1c;transform:scaleX(0.9145);transform-origin:0 0;-webkit-text-stroke:0.15px #1c1c1c">Windows Memory Diagnostic</div>
<div class="a" style="left:958.70px;top:430.37px;font-size:8.841px;font-weight:400;color:#1c1c1c;transform:scaleX(0.8900);transform-origin:0 0;-webkit-text-stroke:0.15px #1c1c1c">Windows PowerShell</div>
<div class="a" style="left:958.70px;top:445.02px;font-size:8.841px;font-weight:400;color:#1c1c1c;transform:scaleX(0.8800);transform-origin:0 0;-webkit-text-stroke:0.15px #1c1c1c">Windows PowerShell (x86)</div>
<div class="a" style="left:958.70px;top:459.67px;font-size:8.841px;font-weight:400;color:#1c1c1c;transform:scaleX(0.8783);transform-origin:0 0;-webkit-text-stroke:0.15px #1c1c1c">Windows Server Backup</div>
<svg class="a" style="left:1165px;top:315px" width="4" height="6"><path d="M0 0 L3.5 3 L0 6 Z" fill="#222"/></svg>
<svg class="a" style="left:840px;top:35px" width="120" height="105" viewBox="840 35 120 105">
 <path d="M858.9 46.5 L861.1 42.5 L902.6 66.9 L904.4 63.7 L937.3 87.7 L898.6 74.1 L900.4 70.9 Z" fill="#a52a2a"/>
 <path d="M845 124.5 L901 124.5 L901 122 L951 127.7 L901 133.8 L901 131 L845 131 Z" fill="#a52a2a"/>
</svg>
<div class="a" style="left:0;top:688px;width:1280px;height:32px;background:#ededed;border-top:2px solid #fbfbfb"></div>
<svg class="a" style="left:499px;top:696.5px" width="17" height="16" viewBox="0 0 17 16">
 <defs><linearGradient id="wg" x1="0" y1="0" x2="16" y2="16" gradientUnits="userSpaceOnUse"><stop offset="0" stop-color="#2fbaf8"/><stop offset="1" stop-color="#0a6ad6"/></linearGradient></defs>
 <rect x="0.3" y="0.3" width="7.2" height="7.2" rx="0.6" fill="url(#wg)"/><rect x="8.3" y="0.3" width="7.2" height="7.2" rx="0.6" fill="url(#wg)"/>
 <rect x="0.3" y="8.3" width="7.2" height="7.2" rx="0.6" fill="url(#wg)"/><rect x="8.3" y="8.3" width="7.2" height="7.2" rx="0.6" fill="url(#wg)"/>
</svg>
<div class="a" style="left:524px;top:694px;width:145px;height:20.3px;border-radius:10px;background:#fbfbfb;border:1px solid #e2e2e2"></div>
<svg class="a" style="left:530px;top:698px" width="12" height="12" viewBox="0 0 12 12"><circle cx="5.2" cy="5.2" r="3.8" fill="none" stroke="#1e1e1e" stroke-width="1.4"/><path d="M8 8 L10.8 10.8" stroke="#1e1e1e" stroke-width="1.6"/></svg>
<div class="a" style="left:547.55px;top:698.27px;font-size:9.710px;font-weight:400;color:#5a5a5a;transform:scaleX(0.9076);transform-origin:0 0;">Search</div>
<svg class="a" style="left:678px;top:697px" width="16" height="15" viewBox="0 0 16 15">
 <rect x="4" y="0" width="11" height="10" fill="#e2e2e2"/>
 <rect x="0" y="4" width="11" height="10.5" fill="#1f1f1f"/>
 <rect x="4" y="4" width="7" height="6" fill="#b8b8b8"/>
</svg>
<svg class="a" style="left:707px;top:696.5px" width="17" height="15" viewBox="0 0 17 15">
 <path d="M0 1 L6 1 L8 3 L16.5 3 L16.5 14.5 L0 14.5 Z" fill="#f6c644"/>
 <path d="M0 1 L6 1 L8 3 L0 3 Z" fill="#dc9f1c"/>
 <rect x="3" y="10" width="11" height="4.5" rx="1" fill="#1a80d8"/>
</svg>
<svg class="a" style="left:736.6px;top:696px" width="16.4" height="16" viewBox="0 0 16 16">
 <rect width="16" height="16" fill="#b42c2c"/>
 <path d="M0.7 7.8 C1.3 -1.6 7 -1.6 8 7.8 C9 17.2 14.7 17.2 15.3 7.8" fill="none" stroke="#fff" stroke-width="1.5"/>
 <rect x="0" y="7.5" width="16" height="1" fill="#e0e0e0"/>
</svg>
<div class="a" style="left:762px;top:692px;width:25px;height:25px;background:#f6f6f6;border-radius:3px;border:1px solid #e4e4e4"></div>
<svg class="a" style="left:766px;top:696px" width="17" height="16" viewBox="0 0 17 16">
 <rect x="1" y="1" width="6.5" height="13" fill="#1c7ee0"/>
 <rect x="2" y="4" width="4.5" height="0.8" fill="#9cc9f5"/>
 <path d="M3.5 9 L6 8.2 L6 7.3 L10 7.3 L10 8.2 L15.5 9 L15.5 15.2 L3.5 15.2 Z" fill="#6e8ca4"/>
 <rect x="4.5" y="11" width="10" height="1" fill="#dbe6ee"/>
</svg>
<div class="a" style="left:769px;top:714.8px;width:10.4px;height:1.8px;background:#1b6ed6;border-radius:1px"></div>
<svg class="a" style="left:1143px;top:701px" width="10" height="6"><path d="M0.8 5.2 L4.4 1.2 L8 5.2" fill="none" stroke="#222" stroke-width="1.2"/></svg>
<div class="a" style="left:1164.49px;top:694.90px;font-size:7.391px;font-weight:400;color:#222222;transform:scaleX(1.0267);transform-origin:0 0;">ENG</div>
<div class="a" style="left:1167.32px;top:705.17px;font-size:7.971px;font-weight:400;color:#222222;transform:scaleX(0.9659);transform-origin:0 0;">US</div>
<svg class="a" style="left:1191.5px;top:698px" width="14" height="12" viewBox="0 0 14 12">
 <rect x="0.6" y="0.9" width="9.5" height="8.6" rx="1.3" fill="none" stroke="#222" stroke-width="1.1"/>
 <rect x="3" y="10.2" width="5.2" height="1.1" fill="#222"/>
 <circle cx="11.5" cy="2.4" r="1.5" fill="#eee" stroke="#222" stroke-width="0.9"/>
 <rect x="11" y="3.9" width="1" height="5.2" fill="#222"/>
</svg>
<svg class="a" style="left:1208px;top:699.5px" width="13" height="9" viewBox="0 0 13 9">
 <path d="M0.5 2.8 L2.8 2.8 L5.4 0.6 L5.4 8.4 L2.8 6.2 L0.5 6.2 Z" fill="none" stroke="#222" stroke-width="0.9"/>
 <path d="M7.3 2.6 Q8.4 4.5 7.3 6.4 M9.2 1.4 Q11 4.5 9.2 7.6 M11 0.4 Q13.2 4.5 11 8.6" fill="none" stroke="#222" stroke-width="0.9"/>
</svg>
<div class="a" style="left:1234.07px;top:694.50px;font-size:7.391px;font-weight:400;color:#222222;transform:scaleX(1.0623);transform-origin:0 0;">12:18 PM</div>
<div class="a" style="left:1230.03px;top:704.73px;font-size:7.681px;font-weight:400;color:#222222;transform:scaleX(1.0955);transform-origin:0 0;">8/14/2025</div>
</body></html>
